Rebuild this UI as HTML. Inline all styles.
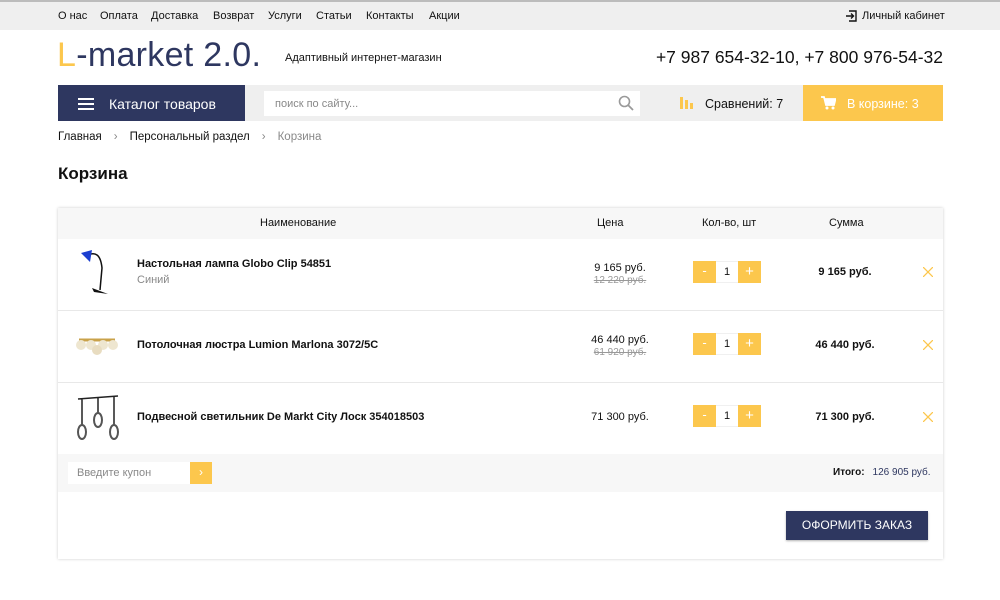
<!DOCTYPE html>
<html><head><meta charset="utf-8"><style>
*{box-sizing:border-box;margin:0;padding:0}
body{width:1000px;height:600px;overflow:hidden;background:#fff;font-family:"Liberation Sans",sans-serif;color:#111;position:relative}
.abs{position:absolute}
.top{left:0;top:0;width:1000px;height:30px;background:#efefef;border-top:2px solid #bcbcbc}
.top span{position:absolute;top:8px;font-size:11px}
.num{font-size:12px;font-weight:bold}
.y{background:#fcc74d}
</style></head><body>
<div class="abs top">
<span style="left:58px">О нас</span><span style="left:100px">Оплата</span><span style="left:151px">Доставка</span><span style="left:213px">Возврат</span><span style="left:268px">Услуги</span><span style="left:316px">Статьи</span><span style="left:366px">Контакты</span><span style="left:429px">Акции</span>
<svg class="abs" style="left:845px;top:8px" width="12" height="12" viewBox="0 0 12 12"><path d="M4 1H11V11H4M1 6H8M6 3.5L8.5 6L6 8.5" stroke="#111" stroke-width="1.4" fill="none"/></svg>
<span style="left:862px">Личный кабинет</span>
</div>
<div class="abs" style="left:57px;top:36px;font-size:34px;color:#2e3760;letter-spacing:0.3px"><span style="color:#fcc74d">L</span>-market 2.0.</div>
<div class="abs" style="left:285px;top:52px;font-size:11px">Адаптивный интернет-магазин</div>
<div class="abs" style="right:57px;top:47px;font-size:17.5px">+7 987 654-32-10, +7 800 976-54-32</div>
<div class="abs" style="left:245px;top:85px;width:558px;height:36px;background:#efefef"></div>
<div class="abs" style="left:58px;top:85px;width:187px;height:36px;background:#2e3760;color:#fff;font-size:14px;padding:11px 0 0 51px">Каталог товаров
<div class="abs" style="left:20px;top:13px;width:16px;height:2px;background:#fff;box-shadow:0 5px #fff,0 10px #fff"></div></div>
<div class="abs" style="left:264px;top:91px;width:376px;height:25px;background:#fff;font-size:11px;color:#888;padding:7px 0 0 11px">поиск по сайту...
<svg class="abs" style="right:6px;top:4px" width="16" height="16" viewBox="0 0 16 16"><circle cx="6.5" cy="6.5" r="5" stroke="#999" stroke-width="1.6" fill="none"/><path d="M10 10L15 15" stroke="#999" stroke-width="1.8"/></svg></div>
<div class="abs" style="left:680px;top:97px;width:3px;height:12px;background:#fcc74d"></div>
<div class="abs" style="left:685px;top:100px;width:3px;height:9px;background:#fcc74d"></div>
<div class="abs" style="left:690px;top:103px;width:3px;height:6px;background:#fcc74d"></div>
<div class="abs" style="left:705px;top:97px;font-size:12.5px">Сравнений: 7</div>
<div class="abs y" style="left:803px;top:85px;width:140px;height:36px;color:#fff;font-size:12.5px;padding:12px 0 0 44px">В корзине: 3
<svg class="abs" style="left:18px;top:11px" width="15" height="14" viewBox="0 0 15 14"><path d="M0 1H3L5 9H13L14.5 3H4" stroke="#fff" stroke-width="1.8" fill="#fff"/><circle cx="6" cy="12" r="1.5" fill="#fff"/><circle cx="12" cy="12" r="1.5" fill="#fff"/></svg></div>
<div class="abs" style="left:58px;top:131px;font-size:11.5px">Главная<span style="color:#888;margin:0 12px">›</span>Персональный раздел<span style="color:#888;margin:0 12px">›</span><span style="color:#888">Корзина</span></div>
<div class="abs" style="left:58px;top:164px;font-size:17px;font-weight:bold">Корзина</div>

<div class="abs" style="left:58px;top:208px;width:885px;height:351px;background:#fff;box-shadow:0 0 3px rgba(0,0,0,.2)">
<div class="abs" style="left:0;top:0;width:885px;height:31px;background:#f7f7f7;font-size:11px">
<span class="abs" style="left:202px;top:9px">Наименование</span><span class="abs" style="left:539px;top:9px">Цена</span><span class="abs" style="left:644px;top:9px">Кол-во, шт</span><span class="abs" style="left:771px;top:9px">Сумма</span></div>
</div>
<div class="abs" style="left:58px;top:310px;width:885px;height:1px;background:#e8e8e8"></div>
<div class="abs" style="left:58px;top:382px;width:885px;height:1px;background:#e8e8e8"></div>

<svg class="abs" style="left:78px;top:248px" width="36" height="52" viewBox="0 0 36 52"><path d="M8 8Q22 0 24 20L22 42" stroke="#111" stroke-width="1.5" fill="none"/><path d="M3 5L14 2L12 14Z" fill="#1c3fd0"/><path d="M14 40L30 46L16 44Z" fill="#111"/></svg>
<svg class="abs" style="left:73px;top:330px" width="48" height="26" viewBox="0 0 48 26"><path d="M6 10H42" stroke="#c9a24a" stroke-width="3"/><circle cx="8" cy="15" r="5" fill="#eee6d0"/><circle cx="40" cy="15" r="5" fill="#eee6d0"/><circle cx="18" cy="15" r="5" fill="#eee6d0"/><circle cx="30" cy="15" r="5" fill="#eee6d0"/><circle cx="24" cy="20" r="5" fill="#e8dcc0"/></svg>
<svg class="abs" style="left:76px;top:394px" width="44" height="48" viewBox="0 0 44 48"><path d="M2 5L42 2M6 5V32M22 4V20M38 3V32" stroke="#222" stroke-width="1.5"/><ellipse cx="6" cy="38" rx="4" ry="7" fill="none" stroke="#555" stroke-width="2"/><ellipse cx="22" cy="26" rx="4" ry="7" fill="none" stroke="#555" stroke-width="2"/><ellipse cx="38" cy="38" rx="4" ry="7" fill="none" stroke="#555" stroke-width="2"/></svg>

<div class="abs num" style="left:137px;top:258px;font-size:11px">Настольная лампа Globo Clip 54851</div>
<div class="abs" style="left:137px;top:274px;font-size:11px;color:#888">Синий</div>
<div class="abs num" style="left:137px;top:339px;font-size:11px">Потолочная люстра Lumion Marlona 3072/5C</div>
<div class="abs num" style="left:137px;top:411px;font-size:11px">Подвесной светильник De Markt City Лоск 354018503</div>

<div class="abs" style="left:560px;top:262px;width:120px;text-align:center;font-size:11px">9 165 руб.<br><s style="color:#999;font-size:10px">12 220 руб.</s></div>
<div class="abs" style="left:560px;top:334px;width:120px;text-align:center;font-size:11px">46 440 руб.<br><s style="color:#999;font-size:10px">61 920 руб.</s></div>
<div class="abs" style="left:560px;top:411px;width:120px;text-align:center;font-size:11px">71 300 руб.</div>

<div class="abs" style="left:693px;top:261px;width:68px;height:22px;border:1px solid #f0f0f0"><div class="abs y" style="left:-1px;top:-1px;width:23px;height:22px;color:#fff;text-align:center;font-size:13px;line-height:20px">-</div><div class="abs" style="left:22px;top:4px;width:22px;text-align:center;font-size:11px">1</div><div class="abs y" style="left:44px;top:-1px;width:23px;height:22px;color:#fff;text-align:center;font-size:15px;line-height:21px">+</div></div>
<div class="abs" style="left:693px;top:333px;width:68px;height:22px;border:1px solid #f0f0f0"><div class="abs y" style="left:-1px;top:-1px;width:23px;height:22px;color:#fff;text-align:center;font-size:13px;line-height:20px">-</div><div class="abs" style="left:22px;top:4px;width:22px;text-align:center;font-size:11px">1</div><div class="abs y" style="left:44px;top:-1px;width:23px;height:22px;color:#fff;text-align:center;font-size:15px;line-height:21px">+</div></div>
<div class="abs" style="left:693px;top:405px;width:68px;height:22px;border:1px solid #f0f0f0"><div class="abs y" style="left:-1px;top:-1px;width:23px;height:22px;color:#fff;text-align:center;font-size:13px;line-height:20px">-</div><div class="abs" style="left:22px;top:4px;width:22px;text-align:center;font-size:11px">1</div><div class="abs y" style="left:44px;top:-1px;width:23px;height:22px;color:#fff;text-align:center;font-size:15px;line-height:21px">+</div></div>

<div class="abs num" style="left:805px;top:266px;width:80px;text-align:center;font-size:11px">9 165 руб.</div>
<div class="abs num" style="left:805px;top:339px;width:80px;text-align:center;font-size:11px">46 440 руб.</div>
<div class="abs num" style="left:805px;top:411px;width:80px;text-align:center;font-size:11px">71 300 руб.</div>
<svg class="abs" style="left:923px;top:267px" width="10" height="10"><path d="M0 0L10 10M10 0L0 10" stroke="#fcc74d" stroke-width="1.3"/></svg>
<svg class="abs" style="left:923px;top:340px" width="10" height="10"><path d="M0 0L10 10M10 0L0 10" stroke="#fcc74d" stroke-width="1.3"/></svg>
<svg class="abs" style="left:923px;top:412px" width="10" height="10"><path d="M0 0L10 10M10 0L0 10" stroke="#fcc74d" stroke-width="1.3"/></svg>

<div class="abs" style="left:58px;top:454px;width:885px;height:38px;background:#f7f7f7"></div>
<div class="abs" style="left:68px;top:462px;width:122px;height:22px;background:#fff;font-size:11px;color:#888;padding:5px 0 0 9px">Введите купон</div>
<div class="abs y" style="left:190px;top:462px;width:22px;height:22px;color:#fff;text-align:center;font-size:12px;line-height:21px">›</div>
<div class="abs" style="left:833px;top:467px;font-size:10px"><b>Итого:</b><span style="color:#2e3760;margin-left:8px">126 905 руб.</span></div>
<div class="abs" style="left:786px;top:511px;width:142px;height:29px;background:#2e3760;color:#fff;font-size:12px;text-align:center;line-height:29px;box-shadow:0 1px 2px rgba(0,0,0,.3)">ОФОРМИТЬ ЗАКАЗ</div>
</body></html>
